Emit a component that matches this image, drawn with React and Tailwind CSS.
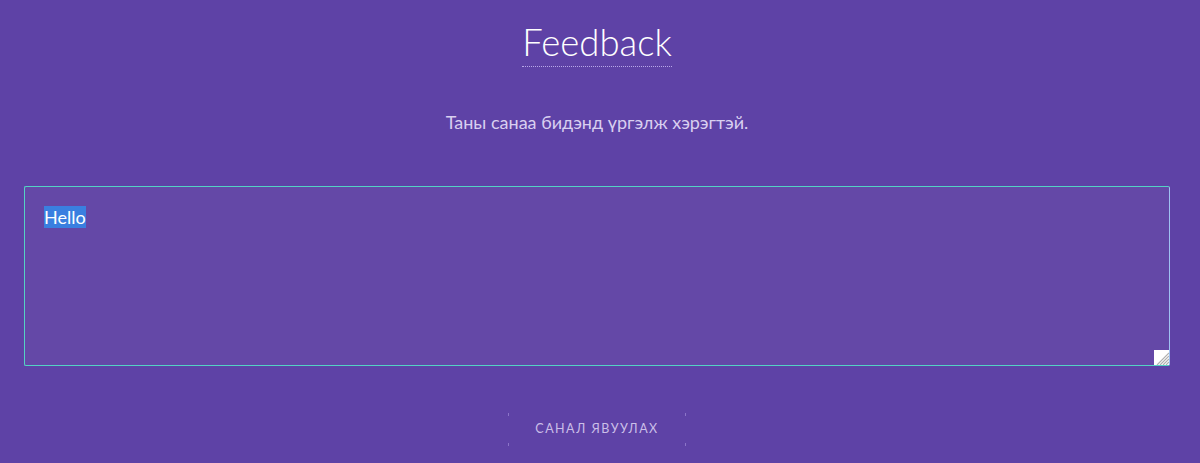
export default function App() {
  return (
    <div className="min-h-[463px] w-full bg-[#5e42a6] pr-[6px] font-['Lato','Noto_Sans',sans-serif] text-white">
      <div className="flex flex-col items-center pt-[20px]">
        <h1 className="border-b border-dotted border-[#b9a8e8] pb-[2px] text-[36.5px] font-light leading-[44px] text-white">
          Feedback
        </h1>
        <p className="mt-[43px] text-[18px] leading-[24px] text-[#d9cff0]">
          Таны санаа бидэнд үргэлж хэрэгтэй.
        </p>
      </div>

      <div className="px-[24px] pt-[52px]">
        <div className="relative h-[180px] w-full rounded-[2px] border border-[#54d2c4] border-r-[#9fc2f2] bg-[#6448a7] px-[19px] py-[18px]">
          <span className="bg-[#3a7fe0] text-[18px] leading-[24px] text-white">Hello</span>
          <svg
            className="absolute bottom-0 right-0"
            width="15"
            height="15"
            viewBox="0 0 15 15"
          >
            <rect width="15" height="15" fill="#ffffff" />
            <path
              d="M15 3 L3 15 M15 6 L6 15 M15 9 L9 15 M15 12 L12 15"
              stroke="#b0b0b0"
              strokeWidth="1.2"
            />
          </svg>
        </div>
      </div>

      <div className="flex justify-center pt-[47px]">
        <button className="relative h-[33px] px-[27px] text-[12.5px] uppercase tracking-[0.12em] text-[#cbbfe8]">
          <span className="absolute left-0 top-0 h-[3px] w-[1px] bg-[#8b75c8]" />
          <span className="absolute right-0 top-0 h-[3px] w-[1px] bg-[#8b75c8]" />
          <span className="absolute bottom-0 left-0 h-[3px] w-[1px] bg-[#8b75c8]" />
          <span className="absolute bottom-0 right-0 h-[3px] w-[1px] bg-[#8b75c8]" />
          Санал явуулах
        </button>
      </div>
    </div>
  );
}
